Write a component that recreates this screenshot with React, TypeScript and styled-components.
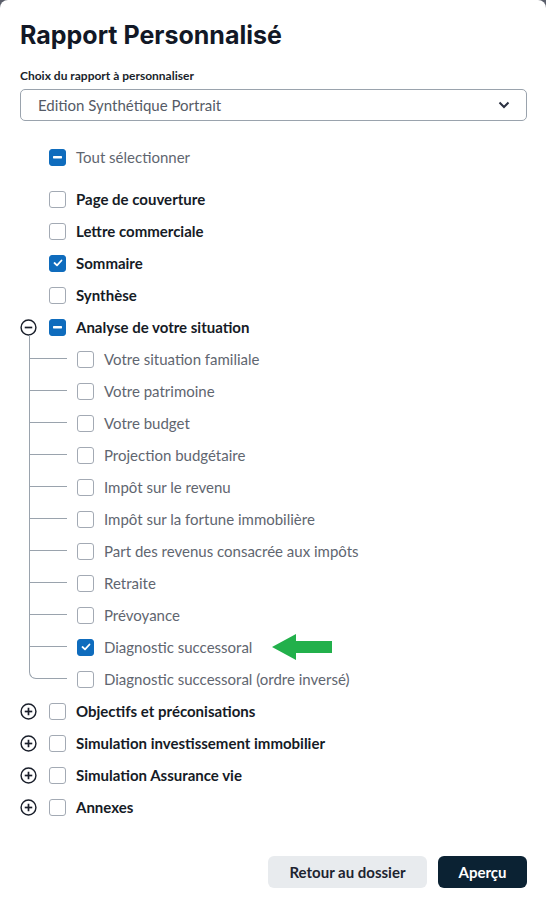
import styled, { createGlobalStyle } from "styled-components";

const GlobalStyle = createGlobalStyle`
  html, body {
    margin: 0;
    padding: 0;
    background: #5b5f6b;
  }
  body {
    font-family: Lato, "Noto Sans", sans-serif;
  }
`;

const Card = styled.div`
  box-sizing: border-box;
  width: 546px;
  height: 897px;
  background: #ffffff;
  border-radius: 8px 8px 0 0;
  padding: 17px 19px 9px 20px;
  display: flex;
  flex-direction: column;
`;

const Title = styled.h1`
  margin: 0;
  font-family: Inter, sans-serif;
  font-weight: 700;
  font-size: 25px;
  line-height: 36px;
  color: #121826;
`;

const Label = styled.div`
  margin-top: 15px;
  font-size: 12px;
  font-weight: 700;
  color: #1a1f2b;
  line-height: 16px;
`;

const Select = styled.div`
  margin-top: 5px;
  height: 32px;
  box-sizing: border-box;
  border: 1px solid #9aa3ad;
  border-radius: 5px;
  display: flex;
  align-items: center;
  justify-content: space-between;
  padding: 0 16px 0 17px;
  font-size: 15px;
  color: #555b66;
`;

const Tree = styled.div`
  margin-top: 20px;
  display: flex;
  flex-direction: column;
`;

const Row = styled.div<{ $gapAfter?: number }>`
  height: 32px;
  display: flex;
  align-items: center;
  margin-bottom: ${(p) => p.$gapAfter ?? 0}px;
`;

const ToggleSlot = styled.div`
  width: 17px;
  height: 17px;
  margin-right: 12px;
  flex: none;
  display: flex;
  align-items: center;
  justify-content: center;
`;

const Box = styled.span<{ $state: "off" | "on" | "mixed" }>`
  box-sizing: border-box;
  width: 17px;
  height: 17px;
  flex: none;
  border-radius: 3px;
  border: 1.5px solid ${(p) => (p.$state === "off" ? "#a3aab4" : "#0f6cbd")};
  background: ${(p) => (p.$state === "off" ? "#ffffff" : "#0f6cbd")};
  display: flex;
  align-items: center;
  justify-content: center;
  margin-right: 10px;
`;

const Text = styled.span<{ $bold?: boolean; $muted?: boolean }>`
  font-size: 15px;
  font-weight: ${(p) => (p.$bold ? 700 : 400)};
  color: ${(p) => (p.$muted ? "#5f6670" : "#161b26")};
  white-space: nowrap;
`;

const ChildList = styled.div`
  margin-left: 9px;
  display: flex;
  flex-direction: column;
`;

const ChildRow = styled.div`
  position: relative;
  height: 32px;
  display: flex;
  align-items: center;
  padding-left: 48px;

  &::before {
    content: "";
    position: absolute;
    left: 0;
    top: -8px;
    width: 38px;
    height: 24px;
    box-sizing: border-box;
    border-left: 1px solid #9aa3ad;
    border-bottom: 1px solid #9aa3ad;
  }

  &:not(:last-child)::after {
    content: "";
    position: absolute;
    left: 0;
    top: 16px;
    bottom: 0;
    border-left: 1px solid #9aa3ad;
  }

  &:last-child::before {
    border-bottom-left-radius: 7px;
  }
`;

const Arrow = styled.svg`
  margin-left: 20px;
  flex: none;
`;

const Footer = styled.div`
  margin-top: auto;
  display: flex;
  justify-content: flex-end;
  gap: 11px;
`;

const Button = styled.button<{ $primary?: boolean }>`
  height: 32px;
  border: none;
  border-radius: 6px;
  font-family: Lato, "Noto Sans", sans-serif;
  font-size: 15px;
  font-weight: 700;
  padding: 0;
  background: ${(p) => (p.$primary ? "#0b2233" : "#e8ebee")};
  color: ${(p) => (p.$primary ? "#ffffff" : "#1d2430")};
  width: ${(p) => (p.$primary ? 89 : 159)}px;
`;

type State = "off" | "on" | "mixed";

function Check({ state }: { state: State }) {
  return (
    <Box $state={state}>
      {state === "on" && (
        <svg width="10" height="8" viewBox="0 0 10 8">
          <path d="M1.5 4 L4 6.3 L8.5 1.5" fill="none" stroke="#fff" strokeWidth="1.8" strokeLinecap="round" strokeLinejoin="round" />
        </svg>
      )}
      {state === "mixed" && (
        <svg width="9" height="3" viewBox="0 0 9 3">
          <rect x="0" y="0" width="9" height="2.4" rx="0.6" fill="#fff" />
        </svg>
      )}
    </Box>
  );
}

function Toggle({ open }: { open: boolean }) {
  return (
    <svg width="19" height="19" viewBox="0 0 19 19">
      <circle cx="9.5" cy="9.5" r="8.3" fill="#fff" stroke="#1a1f2b" strokeWidth="1.6" />
      <path d="M5.3 9.5 H13.7" stroke="#1a1f2b" strokeWidth="1.9" />
      {!open && <path d="M9.5 5.3 V13.7" stroke="#1a1f2b" strokeWidth="1.9" />}
    </svg>
  );
}

const topItems: { label: string; state: State }[] = [
  { label: "Page de couverture", state: "off" },
  { label: "Lettre commerciale", state: "off" },
  { label: "Sommaire", state: "on" },
  { label: "Synthèse", state: "off" },
];

const children: { label: string; state: State }[] = [
  { label: "Votre situation familiale", state: "off" },
  { label: "Votre patrimoine", state: "off" },
  { label: "Votre budget", state: "off" },
  { label: "Projection budgétaire", state: "off" },
  { label: "Impôt sur le revenu", state: "off" },
  { label: "Impôt sur la fortune immobilière", state: "off" },
  { label: "Part des revenus consacrée aux impôts", state: "off" },
  { label: "Retraite", state: "off" },
  { label: "Prévoyance", state: "off" },
  { label: "Diagnostic successoral", state: "on" },
  { label: "Diagnostic successoral (ordre inversé)", state: "off" },
];

const closedGroups = [
  "Objectifs et préconisations",
  "Simulation investissement immobilier",
  "Simulation Assurance vie",
  "Annexes",
];

export default function App() {
  return (
    <>
      <GlobalStyle />
      <Card>
        <Title>Rapport Personnalisé</Title>
        <Label>Choix du rapport à personnaliser</Label>
        <Select>
          <span>Edition Synthétique Portrait</span>
          <svg width="12" height="8" viewBox="0 0 12 8">
            <path d="M1.5 1.5 L6 6 L10.5 1.5" fill="none" stroke="#2a3040" strokeWidth="2" />
          </svg>
        </Select>
        <Tree>
          <Row $gapAfter={10}>
            <ToggleSlot />
            <Check state="mixed" />
            <Text $muted>Tout sélectionner</Text>
          </Row>
          {topItems.map((it) => (
            <Row key={it.label}>
              <ToggleSlot />
              <Check state={it.state} />
              <Text $bold>{it.label}</Text>
            </Row>
          ))}
          <Row>
            <ToggleSlot>
              <Toggle open />
            </ToggleSlot>
            <Check state="mixed" />
            <Text $bold>Analyse de votre situation</Text>
          </Row>
          <ChildList>
            {children.map((c) => (
              <ChildRow key={c.label}>
                <Check state={c.state} />
                <Text $muted>{c.label}</Text>
                {c.label === "Diagnostic successoral" && (
                  <Arrow width="60" height="26" viewBox="0 0 60 26">
                    <path d="M0 13 L24 0 L24 7 L60 7 L60 19 L24 19 L24 26 Z" fill="#22b04b" />
                  </Arrow>
                )}
              </ChildRow>
            ))}
          </ChildList>
          {closedGroups.map((g) => (
            <Row key={g}>
              <ToggleSlot>
                <Toggle open={false} />
              </ToggleSlot>
              <Check state="off" />
              <Text $bold>{g}</Text>
            </Row>
          ))}
        </Tree>
        <Footer>
          <Button>Retour au dossier</Button>
          <Button $primary>Aperçu</Button>
        </Footer>
      </Card>
    </>
  );
}
